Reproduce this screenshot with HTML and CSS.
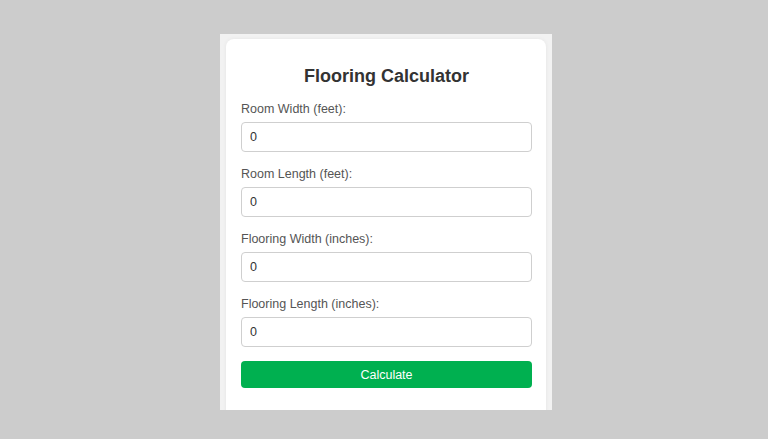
FILE: index.html
```html
<!DOCTYPE html>
<html lang="en">
<head>
    <meta charset="UTF-8">
    <meta name="viewport" content="width=device-width, initial-scale=1.0">
    <title>Flooring Calculator</title>
    <link rel="stylesheet" href="styles.css">
</head>
<body>
    <div class="frame">
        <div class="calculator">
            <h2>Flooring Calculator</h2>

            <div class="field">
                <label for="roomWidth">Room Width (feet):</label>
                <input type="number" id="roomWidth" value="0">
            </div>
            <div class="field">
                <label for="roomLength">Room Length (feet):</label>
                <input type="number" id="roomLength" value="0">
            </div>
            <div class="field">
                <label for="floorWidth">Flooring Width (inches):</label>
                <input type="number" id="floorWidth" value="0">
            </div>
            <div class="field">
                <label for="floorLength">Flooring Length (inches):</label>
                <input type="number" id="floorLength" value="0">
            </div>

            <button class="calc-btn">Calculate</button>
        </div>
    </div>
</body>
</html>
```

FILE: styles.css
```css
* {
    margin: 0;
    padding: 0;
    box-sizing: border-box;
}

body {
    background: #cccccc;
    font-family: 'Liberation Sans', Arial, sans-serif;
    padding-top: 34px;
}

.frame {
    width: 332px;
    height: 376px;
    margin-left: 220px;
    padding: 5px 6px 0 6px;
    background: #f2f2f2;
    overflow: hidden;
}

.calculator {
    background: #fff;
    border-radius: 8px;
    padding: 27px 14px 40px 15px;
    box-shadow: 0 0 4px rgba(0, 0, 0, 0.06);
}

h2 {
    text-align: center;
    color: #333;
    font-size: 18px;
    font-weight: bold;
    line-height: 21px;
    margin-bottom: 15px;
}

.field {
    margin-bottom: 15px;
}

.field:last-of-type {
    margin-bottom: 14px;
}

.field label {
    display: block;
    color: #555;
    font-size: 12.5px;
    line-height: 15px;
    margin-bottom: 5px;
}

.field input {
    display: block;
    width: 100%;
    height: 30px;
    padding: 0 8px;
    border: 1px solid #cfcfcf;
    border-radius: 4px;
    font-family: inherit;
    font-size: 12.5px;
    color: #333;
    background: #fff;
    -moz-appearance: textfield;
}

.field input::-webkit-inner-spin-button,
.field input::-webkit-outer-spin-button {
    -webkit-appearance: none;
    margin: 0;
}

.calc-btn {
    display: block;
    width: 100%;
    height: 27px;
    border: none;
    border-radius: 4px;
    background: #00b050;
    color: #fff;
    font-family: inherit;
    font-size: 12.5px;
    cursor: pointer;
}
```
